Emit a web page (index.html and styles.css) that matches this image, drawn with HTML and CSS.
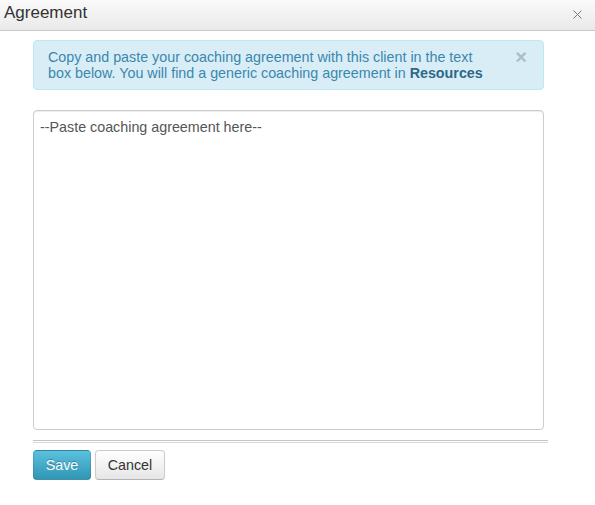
FILE: index.html
```html
<!DOCTYPE html>
<html>
<head>
<meta charset="utf-8">
<link rel="stylesheet" href="styles.css">
</head>
<body>
<div class="dialog">
  <div class="dialog-header">
    <span class="dialog-title">Agreement</span>
    <button class="dialog-close" aria-label="Close">
      <svg width="9" height="9" viewBox="0 0 9 9"><path d="M0.5 0.5L8.5 8.5M8.5 0.5L0.5 8.5" stroke="#7a7a7a" stroke-width="1"/></svg>
    </button>
  </div>
  <div class="dialog-body">
    <div class="alert">
      <button class="alert-close">×</button>
      <p class="alert-text">Copy and paste your coaching agreement with this client in the text box below. You will find a generic coaching agreement in <a class="alert-link" href="#">Resources</a></p>
    </div>
    <textarea class="agreement-input">--Paste coaching agreement here--</textarea>
    <hr class="divider">
    <div class="actions">
      <button class="btn btn-info">Save</button>
      <button class="btn btn-default">Cancel</button>
    </div>
  </div>
</div>
</body>
</html>
```

FILE: styles.css
```css
* { box-sizing: border-box; }
html, body { margin: 0; padding: 0; background: #fff; }
body { font-family: "Liberation Sans", Arial, sans-serif; font-size: 14.3px; color: #333; }

.dialog-header {
  height: 31px;
  padding: 3px 4px 0;
  background: linear-gradient(#fafafa, #e9e9e9);
  border-bottom: 1px solid #c8c8c8;
  display: flex;
  justify-content: space-between;
  align-items: flex-start;
}
.dialog-title { font-size: 17px; line-height: 20px; color: #333; }
.dialog-close {
  border: 0; background: none; padding: 0; margin: 7px 9px 0 0;
  width: 9px; height: 9px; display: block; cursor: pointer;
}
.dialog-close svg { display: block; }

.dialog-body { padding: 9px 0 0 33px; width: 548px; }

.alert {
  position: relative;
  width: 511px;
  background: #d9edf7;
  border: 1px solid #bce8f1;
  border-radius: 4px;
  color: #3a87ad;
  padding: 8px 50px 8px 14px;
  margin-bottom: 20px;
}
.alert-text { margin: 0; line-height: 16px; }
.alert-link { color: #2d6987; font-weight: bold; text-decoration: none; }
.alert-close {
  position: absolute; top: 6px; right: 16px;
  border: 0; background: none; padding: 0;
  font-family: "Liberation Sans", Arial, sans-serif;
  font-size: 20px; font-weight: bold; line-height: 20px;
  color: #000; opacity: 0.2; cursor: pointer;
}

.agreement-input {
  display: block;
  width: 511px; height: 320px;
  border: 1px solid #ccc;
  border-radius: 4px;
  padding: 6px 6px;
  font-family: "Liberation Sans", Arial, sans-serif;
  font-size: 14.3px; line-height: 20px;
  color: #555;
  resize: none;
  box-shadow: inset 0 1px 1px rgba(0,0,0,0.075);
  margin: 0;
}

.divider {
  margin: 10px 0 7px;
  width: 515px;
  height: 3px;
  border: 0;
  border-top: 1px solid #c4c4c4;
  border-bottom: 1px solid #d8d8d8;
}

.actions { display: flex; gap: 4px; }
.btn {
  height: 30px;
  padding: 4px 0;
  font-family: "Liberation Sans", Arial, sans-serif;
  font-size: 14.3px; line-height: 20px;
  border-radius: 4px;
  cursor: pointer;
  text-align: center;
}
.btn-info {
  color: #fff;
  text-shadow: 0 -1px 0 rgba(0,0,0,0.25);
  background: linear-gradient(#5bc0de, #2f96b4);
  border: 1px solid #2a85a0;
  border-color: rgba(0,0,0,0.1) rgba(0,0,0,0.1) rgba(0,0,0,0.25);
  width: 58px;
}
.btn-default {
  color: #333;
  background: linear-gradient(#fff, #e6e6e6);
  border: 1px solid #ccc;
  border-bottom-color: #b3b3b3;
  box-shadow: inset 0 1px 0 rgba(255,255,255,0.2), 0 1px 2px rgba(0,0,0,0.05);
  width: 70px;
}
```
